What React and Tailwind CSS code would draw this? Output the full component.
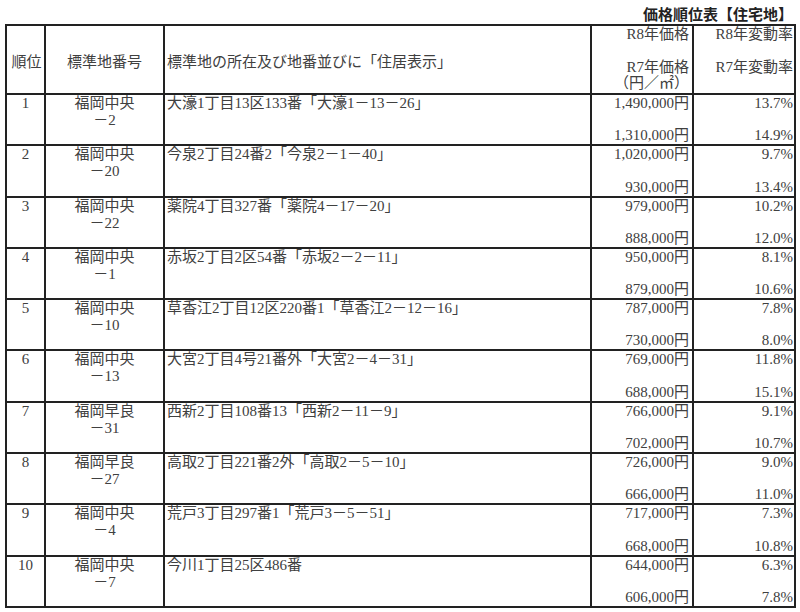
const rows = [
  ["1", "福岡中央", "－2", "大濠1丁目13区133番「大濠1－13－26」", "1,490,000円", "1,310,000円", "13.7%", "14.9%"],
  ["2", "福岡中央", "－20", "今泉2丁目24番2「今泉2－1－40」", "1,020,000円", "930,000円", "9.7%", "13.4%"],
  ["3", "福岡中央", "－22", "薬院4丁目327番「薬院4－17－20」", "979,000円", "888,000円", "10.2%", "12.0%"],
  ["4", "福岡中央", "－1", "赤坂2丁目2区54番「赤坂2－2－11」", "950,000円", "879,000円", "8.1%", "10.6%"],
  ["5", "福岡中央", "－10", "草香江2丁目12区220番1「草香江2－12－16」", "787,000円", "730,000円", "7.8%", "8.0%"],
  ["6", "福岡中央", "－13", "大宮2丁目4号21番外「大宮2－4－31」", "769,000円", "688,000円", "11.8%", "15.1%"],
  ["7", "福岡早良", "－31", "西新2丁目108番13「西新2－11－9」", "766,000円", "702,000円", "9.1%", "10.7%"],
  ["8", "福岡早良", "－27", "高取2丁目221番2外「高取2－5－10」", "726,000円", "666,000円", "9.0%", "11.0%"],
  ["9", "福岡中央", "－4", "荒戸3丁目297番1「荒戸3－5－51」", "717,000円", "668,000円", "7.3%", "10.8%"],
  ["10", "福岡中央", "－7", "今川1丁目25区486番", "644,000円", "606,000円", "6.3%", "7.8%"],
];

export default function App() {
  return (
    <div className="w-[800px] h-[612px] bg-white text-[#404040] font-[family-name:Liberation_Serif,Noto_Sans_CJK_JP,serif] text-[15px] leading-[17px]">
      <div className="h-[24px] pt-[5px] pr-[7px] flex justify-end">
        <span className="font-[family-name:Noto_Sans_CJK_JP,sans-serif] font-bold text-[15px] leading-[18px] text-[#222]">
          価格順位表【住宅地】
        </span>
      </div>
      <div className="ml-[5px] w-[791px] border-2 border-[#222]">
        <div className="grid grid-cols-[39px_119px_427px_102px_100px] h-[69px] border-b-2 border-[#222] leading-[16px]">
          <div className="border-r-2 border-[#222] flex items-center justify-center pt-[4px] pl-[2px]">順位</div>
          <div className="border-r-2 border-[#222] flex items-center justify-center pt-[4px]">標準地番号</div>
          <div className="border-r-2 border-[#222] flex items-center pl-[2px] pt-[4px] whitespace-nowrap">
            標準地の所在及び地番並びに「住居表示」
          </div>
          <div className="border-r-2 border-[#222] flex flex-col justify-between items-end pr-[3px] pb-[2px]">
            <span>R8年価格</span>
            <div className="flex flex-col items-end">
              <span>R7年価格</span>
              <span>（円／㎡）</span>
            </div>
          </div>
          <div className="flex flex-col items-end pr-[1px]">
            <span>R8年変動率</span>
            <span className="mt-[17px]">R7年変動率</span>
          </div>
        </div>
        {rows.map((r, i) => (
          <div
            key={r[0]}
            className={
              i < rows.length - 1
                ? "grid grid-cols-[39px_119px_427px_102px_100px] h-[51.3px] border-b-2 border-[#222]"
                : "grid grid-cols-[39px_119px_427px_102px_100px] h-[49.3px]"
            }
          >
            <div className="border-r-2 border-[#222] text-center">{r[0]}</div>
            <div className="border-r-2 border-[#222] flex flex-col items-center">
              <span>{r[1]}</span>
              <span>{r[2]}</span>
            </div>
            <div className="border-r-2 border-[#222] pl-[2px] whitespace-nowrap">{r[3]}</div>
            <div className="border-r-2 border-[#222] flex flex-col justify-between items-end pr-[3px]">
              <span>{r[4]}</span>
              <span>{r[5]}</span>
            </div>
            <div className="flex flex-col justify-between items-end pr-[1px]">
              <span>{r[6]}</span>
              <span>{r[7]}</span>
            </div>
          </div>
        ))}
      </div>
    </div>
  );
}
